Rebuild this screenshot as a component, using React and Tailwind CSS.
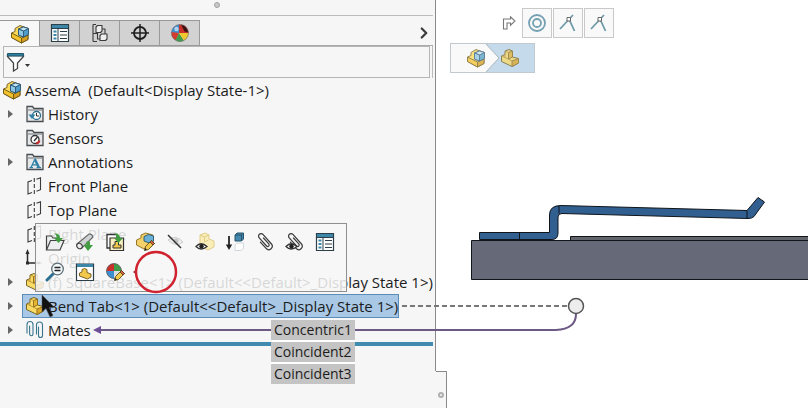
import { ChevronRight } from 'lucide-react'

function AssemblyIcon() {
  return (
    <svg viewBox="0 0 20 20" className="size-5 shrink-0" strokeLinejoin="round" strokeWidth=".9">
      <path d="M1.500 9 5 7.500V4.500l5-3 8 3v11L11.500 19l-10-5.500z" fill="#fbd95a" stroke="#6b5618" />
      <path d="M1.500 9 11.500 14V19l-10-5.500z" fill="#f3c22c" stroke="#6b5618" />
      <path d="M11.500 14 18 11V15.500L11.500 19z" fill="#d79d1c" stroke="#6b5618" />
      <path d="M8.500 5 13.500 3 18.500 4.500v6l-5 2.500-5-2z" fill="#4f9cc8" stroke="#28546f" />
      <path d="M8.500 5 13.500 3 18.500 4.500 13.500 7z" fill="#c4e4f4" stroke="#28546f" />
      <path d="M8.500 5 13.500 7v6l-5-2z" fill="#8cc6e4" stroke="#28546f" />
    </svg>
  )
}

function PartIcon() {
  return (
    <svg viewBox="0 0 20 20" className="size-5 shrink-0" strokeLinejoin="round" strokeWidth=".9">
      <path d="M1.500 8 5 6.500V3L9 1.500 12.500 3v6l6 1.500v4.500L12 18.500l-10.500-5z" fill="#fbdb66" stroke="#6b5618" />
      <path d="M12 13 18.500 10.500v4.500L12 18.500z" fill="#dfa825" stroke="#8a6a1c" />
      <path d="M8.500 4.500 12.500 3v6L8.500 11z" fill="#e6b432" stroke="#8a6a1c" />
      <path d="M1.500 8 5 9.500 12 13M5 3l3.500 1.500M5 6.500v3" fill="none" stroke="#b58d28" />
    </svg>
  )
}

function FolderIcon({ children }) {
  return (
    <svg viewBox="0 0 20 20" className="size-5 shrink-0" fill="none" strokeWidth="1.300">
      <path d="M2 17.500V2.500h5.500L9 4.500h9v13z" fill="#e6e8ea" stroke="#4a4d4f" />
      <path d="M2.500 6h15" stroke="#8d9092" />
      {children}
    </svg>
  )
}

function HistoryIcon() {
  return (
    <FolderIcon>
      <circle cx="11.500" cy="11.500" r="4" fill="#fff" stroke="#2d6d8d" />
      <path d="M11.500 9v3h2.500" stroke="#333" strokeWidth="1" />
      <path d="M3.500 10.500h7l-3.500 4.500z" fill="#2d7fa6" />
    </FolderIcon>
  )
}

function SensorsIcon() {
  return (
    <FolderIcon>
      <circle cx="10" cy="11.500" r="4" fill="#fff" stroke="#333" />
      <path d="m9 13 3.500-4" stroke="#333" strokeWidth="1.500" />
      <path d="M11 15.500a4 4 0 0 0 3.500-3" stroke="#c22b2b" strokeWidth="2" />
    </FolderIcon>
  )
}

function AnnotationsIcon() {
  return (
    <FolderIcon>
      <path d="M6 15.500 9.800 7.500M7.500 12.800h5M4.500 15.700H8M11.500 15.700h4.500" stroke="#2d7fa6" strokeWidth="1.300" />
      <path d="m9.800 7 4 8.500" stroke="#2d7fa6" strokeWidth="2.400" />
    </FolderIcon>
  )
}

function PlaneIcon() {
  return (
    <svg viewBox="0 0 20 20" className="size-5 shrink-0" fill="none" stroke="#3a3a3a" strokeWidth="1.100">
      <path d="M7 4.500 3 6v12l4-1.500M11.500 3.200l4-1.500v12l-4 1.500" />
      <path d="M9.300 2v16" strokeDasharray="4 2" />
    </svg>
  )
}

function OriginIcon() {
  return (
    <svg viewBox="0 0 20 20" className="size-5 shrink-0" fill="#2b2b2b" stroke="#2b2b2b" strokeWidth="1.500">
      <path d="M2.500 15V5M2.500 15H13" />
      <path d="M.5 6 2.500 1 4.500 6zM13 13.500l4 1.500-4 1.500z" strokeWidth="0" />
      <rect x="1" y="13.500" width="3" height="3" strokeWidth="0" />
    </svg>
  )
}

function MatesIcon() {
  return (
    <svg viewBox="0 0 20 20" className="size-5 shrink-0" fill="none" stroke="#3a7590" strokeWidth="1.100" strokeLinecap="round">
      <path d="M2 13V4.500a3 3 0 0 1 6 0V14a1.700 1.700 0 0 1-3.400 0V6" />
      <path d="M11.500 14V5a3 3 0 0 1 6 0v10.500a2 2 0 0 1-4 0V7" />
    </svg>
  )
}

function PropertiesIcon() {
  return (
    <svg viewBox="0 0 20 20" className="size-5" fill="none">
      <path d="M1.500 1.500h17v17h-17z" fill="#fff" stroke="#2c3e48" strokeWidth="1.200" />
      <path d="M2 2h16v3H2z" fill="#3c86a8" />
      <path d="M2 5.500h16M8 5.500v13" stroke="#2c3e48" />
      <path d="M3.500 8.500h3M3.500 12h3M3.500 15.500h3" stroke="#3c86a8" strokeWidth="2" />
      <path d="M10 8.500h7M10 12h7M10 15.500h7" stroke="#2c3e48" strokeWidth="1.200" />
    </svg>
  )
}

function ConfigurationsIcon() {
  return (
    <svg viewBox="0 0 20 20" className="size-5" fill="#efefef" stroke="#3a3a3a" strokeWidth="1.100" strokeLinejoin="round">
      <path d="M3 1.500v17M3 1.500h3M3 10.500h4M3 18.500h4" fill="none" />
      <path d="m6 4 1.500-1.500H12V8l-1.500 1.500H6zM10 12.500l1.500-1.500H17v5l-1.500 1.500H10z" />
      <path d="M12 6h3v5M7.500 10v6H10" fill="none" />
    </svg>
  )
}

function TargetIcon() {
  return (
    <svg viewBox="0 0 20 20" className="size-5" fill="none" stroke="#1f1f1f">
      <circle cx="10" cy="10" r="6" strokeWidth="1.800" />
      <path d="M10 1v18M1 10h18" strokeWidth="1.500" />
    </svg>
  )
}

function DisplayIcon() {
  return (
    <svg viewBox="0 0 20 20" className="size-5">
      <path d="M9 10V1.500A8.500 8.500 0 0 0 1.500 10z" fill="#3c8fd0" />
      <path d="M1.500 9 9 10 6 17.500A8.500 8.500 0 0 1 1.500 9z" fill="#d63a2e" />
      <path d="M9 10 5.500 17.300A8.500 8.500 0 0 0 14 17.500z" fill="#3f9d49" />
      <path d="M9 10l5 7.500A8.500 8.500 0 0 0 18.500 10z" fill="#f0c62f" />
      <path d="M9 10V1.500A8.500 8.500 0 0 1 18.500 10z" fill="#c9302c" />
      <path d="M11 1.500q6 1.500 7.500 8l-4-1z" fill="#3b1010" />
      <path d="M9 10h9.500q-.5 3-1.500 4z" fill="#f0c62f" />
      <circle cx="6.500" cy="6" r="2.200" fill="#fff" opacity=".6" />
      <circle cx="10" cy="10" r="8.500" fill="none" stroke="#666" strokeWidth=".6" />
    </svg>
  )
}

function Pencil() {
  return (
    <g strokeWidth=".8" strokeLinejoin="round">
      <path d="m9.500 18.500 1-4 6-6 3 3-6 6z" fill="#f2c84b" stroke="#4d3a12" />
      <path d="m15 10 1.500-1.500 3 3L18 13z" fill="#d8624f" stroke="#4d3a12" />
      <path d="m9.500 18.500.7-2.500 1.800 1.800z" fill="#222" />
    </g>
  )
}

function Eye() {
  return (
    <g>
      <path d="M1 14.500q5-5.500 11 0-6 5-11 0z" fill="#fff" stroke="#333" strokeWidth="1.300" />
      <circle cx="6.500" cy="14.300" r="2.200" fill="#222" />
    </g>
  )
}

function Clip() {
  return (
    <path
      d="M6.500 7v8.500a3.500 3.500 0 0 0 7 0V3a2.500 2.500 0 0 0-5 0v11a1.500 1.500 0 0 0 3 0V6"
      stroke="#3a3a3a"
      strokeWidth="1.200"
      strokeLinecap="round"
      transform="rotate(-42 10 10)"
    />
  )
}

const GREEN_ARROW = 'M9 1.500q6-.5 6 4.500h3l-4.500 5L9 6h2.500Q12 3 9 1.500z'

const TOOLS = [
  {
    label: 'Open Part',
    art: (
      <>
        <path d="M1.500 18V4h5l1.500 2h5v3M1.500 18l4-9.500h13.500l-4 9.500z" fill="#eceeef" stroke="#444" strokeWidth="1.200" />
        <path d={GREEN_ARROW} fill="#3f9d3f" />
      </>
    ),
  },
  {
    label: 'Make Virtual',
    art: (
      <>
        <path d="M2 12 14 2q3-.5 4 3L7 16z" fill="#d0d3d5" stroke="#666" strokeWidth="1.100" />
        <ellipse cx="4.500" cy="14" rx="2.500" ry="3" fill="#eee" stroke="#444" strokeWidth="1.200" transform="rotate(-40 4.500 14)" />
        <path d="M11.500 9.500H15V13h3l-5 6-4.500-6h3z" fill="#3f9d3f" />
      </>
    ),
  },
  {
    label: 'Edit Drawing',
    art: (
      <>
        <path d="M2 2.500h10V16H2z" fill="#fff" stroke="#333" strokeWidth="1.300" />
        <path d="M5 6h13.500v12.500H5z" fill="#f8eec0" stroke="#333" strokeWidth="1.200" />
        <path d="M8 16v-3h2V9.500h3.500V13H16v3z" fill="#f2c84b" stroke="#333" />
        <path d={GREEN_ARROW} fill="#3f9d3f" />
      </>
    ),
  },
  {
    label: 'Edit Component',
    art: (
      <>
        <path d="M1.500 8 6 6V3l4.500-2L18 3v7L9 17l-7.500-4z" fill="#f5d16a" stroke="#8a6a1c" strokeWidth=".9" />
        <path d="m9 4.500 4.500-2L18.500 4v5L14 11 9 9z" fill="#6bb0d6" stroke="#28546f" strokeWidth=".9" />
        <Pencil />
      </>
    ),
  },
  {
    label: 'Hide Components',
    art: (
      <>
        <path d="M3 8q8-6 15 2-7 6-15-2z" fill="#eee" stroke="#ccc" />
        <circle cx="11" cy="9" r="2.500" fill="#c4c4c4" />
        <path d="m3 3 13 13" stroke="#333" strokeWidth="1.500" />
      </>
    ),
  },
  {
    label: 'Change Transparency',
    art: (
      <>
        <path d="M5 7V3l5-2 4 2v4l5 2v6l-6 3-8-4z" fill="#faeeb8" stroke="#e0cd88" />
        <path d="m5 3 4.500 2L14 3M9.500 5v5l4-2" fill="none" stroke="#e0cd88" />
        <Eye />
      </>
    ),
  },
  {
    label: 'Suppress',
    art: (
      <>
        <path d="M4 4v10" stroke="#222" strokeWidth="1.800" />
        <path d="M.8 12.500h6.400L4 18z" fill="#222" />
        <path d="m10 3 2-2h6.500v6l-2 2H10z" fill="#4389ad" stroke="#28546f" />
        <path d="M10 3h6.500l2-2M16.500 3v6" fill="none" stroke="#28546f" />
        <path d="m10 13 2-2h6.500v5l-2 2.500H10z" fill="#fff" stroke="#cfd8dc" />
      </>
    ),
  },
  { label: 'View Mates', art: <Clip /> },
  {
    label: 'Hide Mates',
    art: (
      <>
        <Clip />
        <Eye />
      </>
    ),
  },
  { label: 'Component Properties', art: <PropertiesIcon /> },
  {
    label: 'Zoom to Selection',
    art: (
      <>
        <path d="m2 18 6-6" stroke="#2d6f93" strokeWidth="3" strokeLinecap="round" />
        <circle cx="12.500" cy="7" r="5.800" fill="#f4f9fb" stroke="#5d6d76" strokeWidth="1.300" />
        <path d="M9.500 5.500h6M9.500 8.500h6" stroke="#222" strokeWidth="1.500" />
      </>
    ),
  },
  {
    label: 'Open in Position',
    art: (
      <>
        <path d="M1.500 2h17v16.500h-17z" fill="#fff" stroke="#2c3e48" strokeWidth="1.200" />
        <path d="M2 2h16v3H2z" fill="#3c86a8" />
        <path d="M4.500 11 7 10V7.500L9.500 6.500 12 7.500v3l4 1.500v3l-3.500 2L4.500 14z" fill="#f2c84b" stroke="#6e5318" strokeWidth=".9" />
      </>
    ),
  },
  {
    label: 'Appearances',
    art: (
      <>
        <path d="M9 9V1.500A7.500 7.500 0 0 0 1.500 9z" fill="#c9302c" />
        <path d="M9 9V1.500A7.500 7.500 0 0 1 16.500 9z" fill="#3f9d49" />
        <path d="M9 9H1.500A7.500 7.500 0 0 0 9 16.500z" fill="#3c8fd0" />
        <path d="M9 9h7.500A7.500 7.500 0 0 1 9 16.500z" fill="#d9dee2" />
        <circle cx="9" cy="9" r="7.500" fill="none" stroke="#555" strokeWidth=".8" />
        <Pencil />
      </>
    ),
  },
]

const TABS = [
  { label: 'FeatureManager Design Tree', icon: <AssemblyIcon /> },
  { label: 'PropertyManager', icon: <PropertiesIcon /> },
  { label: 'ConfigurationManager', icon: <ConfigurationsIcon /> },
  { label: 'DimXpertManager', icon: <TargetIcon /> },
  { label: 'DisplayManager', icon: <DisplayIcon /> },
]

const NODES = [
  { name: 'History', icon: <HistoryIcon />, expandable: true },
  { name: 'Sensors', icon: <SensorsIcon /> },
  { name: 'Annotations', icon: <AnnotationsIcon />, expandable: true },
  { name: 'Front Plane', icon: <PlaneIcon /> },
  { name: 'Top Plane', icon: <PlaneIcon /> },
  { name: 'Right Plane', icon: <PlaneIcon /> },
  { name: 'Origin', icon: <OriginIcon /> },
  { name: '(f) SquareBase<1> (Default<<Default>_Display State 1>)', icon: <PartIcon />, expandable: true },
  { name: 'Bend Tab<1> (Default<<Default>_Display State 1>)', icon: <PartIcon />, expandable: true, selected: true },
  { name: 'Mates', icon: <MatesIcon />, expandable: true },
]

const MATES = ['Concentric1', 'Coincident2', 'Coincident3']

function TreeNode({ node }) {
  return (
    <li className="flex h-6 items-center">
      <span className="flex w-[22px] shrink-0 justify-center pr-0.5">
        {node.expandable && (
          <button type="button" aria-label={`Expand ${node.name}`}>
            <svg viewBox="0 0 5 8" className="h-2 w-[5px]">
              <path d="M0 0 5 4 0 8z" fill="#666" />
            </svg>
          </button>
        )}
      </span>
      <span
        className={
          node.selected
            ? 'flex h-6 items-center gap-[3px] border border-[#5b8db8] bg-[#a8c8e6] pl-0.5'
            : 'flex h-6 items-center gap-[3px] border border-transparent pl-0.5'
        }
      >
        {node.icon}
        {node.name}
      </span>
    </li>
  )
}

function FeatureTree() {
  return (
    <div className="border-b-4 border-[#428bb0]">
      <div className="flex h-6 items-center gap-[3px] whitespace-pre pl-0.5">
        <AssemblyIcon />
        {'AssemA  (Default<Display State-1>)'}
      </div>
      <ul>
        {NODES.map((node) => <TreeNode key={node.name} node={node} />)}
      </ul>
    </div>
  )
}

function ContextToolbar() {
  return (
    <div role="toolbar" className="absolute left-[35px] top-[223px] flex w-[312px] flex-wrap border border-[#8f8f8f] bg-[#f7f7f7]/85 px-1 pb-1 pt-[3px]">
      {TOOLS.map((tool) => (
        <button key={tool.label} type="button" aria-label={tool.label} className="flex size-[30px] items-center justify-center">
          <svg viewBox="0 0 20 20" className="size-5" fill="none">{tool.art}</svg>
        </button>
      ))}
    </div>
  )
}

function Sidebar() {
  return (
    <aside className="w-[54%] shrink-0 border-r border-[#8a8a8a] bg-[#f6f6f6] pb-[25px] pr-0.5">
      <div className="flex h-4 justify-center border-b border-[#bdbdbd] pt-0.5">
        <span className="size-1.5 rounded-full border border-[#a0a0a0] bg-[#c8c8c8]" />
      </div>
      <div className="flex items-end pt-1">
        {TABS.map((tab, i) => (
          <button
            key={tab.label}
            type="button"
            aria-label={tab.label}
            className={
              i === 0
                ? 'flex h-[26px] w-10 items-center justify-center border-r border-t border-[#999] bg-[#f8f8f8]'
                : 'flex h-[26px] w-10 items-center justify-center border-b border-r border-t border-[#999] bg-[#d2d2d2]'
            }
          >
            {tab.icon}
          </button>
        ))}
        <div className="flex h-[26px] flex-1 items-center justify-end border-b border-[#aaa]">
          <button type="button" aria-label="More tabs">
            <ChevronRight size={18} strokeWidth={3} color="#3c3c3c" />
          </button>
        </div>
      </div>
      <div className="border-r border-[#bbb] pl-[3px] pr-0.5">
        <label className="flex h-8 items-center border border-[#b5b5b5] pl-0.5">
          <svg viewBox="0 0 24 20" className="h-5 w-6 shrink-0" fill="none">
            <path d="M1.500 3.500h16v1l-6 6.500v5.500l-4 2.500v-8l-6-6.500z" fill="#fff" stroke="#444" strokeWidth="1.300" />
            <path d="M1.500 1.500h16v2.500h-16z" fill="#2f7f9f" stroke="#24566b" />
            <path d="M19 12h5l-2.500 3z" fill="#333" />
          </svg>
          <input type="text" aria-label="Filter" className="min-w-0 flex-1 bg-transparent outline-none" />
        </label>
      </div>
      <FeatureTree />
    </aside>
  )
}

function CoincidentIcon() {
  return (
    <svg viewBox="0 0 20 20" className="size-5" fill="none">
      <path d="M2 16 15 2M11 6l5.500 12" stroke="#6e9aa8" strokeWidth="1.800" />
      <path d="M9 4.500h3.500V8H9z" fill="#fff" stroke="#666" />
    </svg>
  )
}

function MateBar() {
  return (
    <div className="flex items-center gap-px pl-[66px]">
      <svg viewBox="0 0 14 14" className="mr-[5px] size-3.5" fill="#fff" stroke="#777" strokeWidth="1.100">
        <path d="M1.500 13V3h7V.8L13 5 8.500 9.200V7H5v6z" />
      </svg>
      <button type="button" aria-label="Concentric1" className="flex size-[30px] items-center justify-center border border-[#c9c9c9] bg-[#f9f9f9]">
        <svg viewBox="0 0 20 20" className="size-5" fill="none" stroke="#76a1b3" strokeWidth="1.800">
          <circle cx="10" cy="10" r="8" />
          <circle cx="10" cy="10" r="4" />
        </svg>
      </button>
      <button type="button" aria-label="Coincident2" className="flex size-[30px] items-center justify-center border border-[#c9c9c9] bg-[#f9f9f9]">
        <CoincidentIcon />
      </button>
      <button type="button" aria-label="Coincident3" className="flex size-[30px] items-center justify-center border border-[#c9c9c9] bg-[#f9f9f9]">
        <CoincidentIcon />
      </button>
    </div>
  )
}

function Breadcrumbs() {
  return (
    <nav aria-label="Selection" className="ml-3.5 mt-[5px] flex h-[30px] w-[85px] border border-[#c2c9ce] bg-[#f9f9f9]">
      <button type="button" aria-label="AssemA" className="flex flex-1 items-center justify-end opacity-75">
        <AssemblyIcon />
      </button>
      <svg viewBox="0 0 14 28" className="h-7 w-3.5">
        <path d="M0 0h14v28H0l13-14z" fill="#c5daeb" />
        <path d="m0 0 13 14L0 28" fill="none" stroke="#a8b4bd" />
      </svg>
      <button type="button" aria-label="Bend Tab" className="flex w-[34px] items-center bg-[#c5daeb]">
        <span className="flex opacity-75"><PartIcon /></span>
      </button>
    </nav>
  )
}

// Side view of the bent tab resting on the base plate
function Model() {
  return (
    <svg className="mt-[123px] block h-[88px] w-full" stroke="#10151c" strokeLinejoin="round">
      <rect x="134.500" y="40.500" width="3000" height="4" fill="#62666c" />
      <rect x="35.500" y="44.500" width="3000" height="39" fill="#666a78" />
      <path
        d="M43.500 36.500H113.500V19Q113.500 9.500 125 9.500L311 14.500 322 1.500 328.500 6 318 20.500Q316 22.500 312 22.500L126 17.500Q122 17.500 122 21V37Q122 43.500 116 43.500H43.500z"
        fill="#315f8f"
      />
      <path d="M83.500 36.500v7M123 9.500v8M311 14.500v8" />
    </svg>
  )
}

function Viewport() {
  return (
    <main className="min-w-0 flex-1 overflow-hidden pt-2">
      <MateBar />
      <Breadcrumbs />
      <Model />
    </main>
  )
}

function MateCallout() {
  return (
    <>
      <svg className="pointer-events-none absolute left-0 top-[290px] h-12 w-[600px]" fill="none">
        <path d="M402 16h166" stroke="#777" strokeWidth="2" strokeDasharray="5 3" />
        <path d="M99 40H556Q576 39 576 24" stroke="#6c5a85" strokeWidth="2" />
        <path d="m93 40 8-4v8z" fill="#6c4f96" />
        <circle cx="576" cy="16" r="7.500" fill="#ededed" stroke="#555" strokeWidth="1.500" />
      </svg>
      <ul className="absolute left-[271px] top-[320px] flex flex-col gap-0.5 bg-white text-sm">
        {MATES.map((mate) => <li key={mate} className="h-5 bg-[#c4c4c4] px-[3px] leading-5">{mate}</li>)}
      </ul>
    </>
  )
}

export default function App() {
  return (
    <div className="relative flex min-h-screen flex-col overflow-hidden whitespace-nowrap bg-white font-['Open_Sans',sans-serif] text-[15px] text-[#1c1c1c]">
      <div className="flex">
        <Sidebar />
        <Viewport />
      </div>
      <div className="flex flex-1">
        <div className="w-[54%] shrink-0 bg-[#f6f6f6]" />
        <div className="flex w-[11px] items-center justify-center border-r border-t border-[#8a8a8a] bg-[#f6f6f6] pt-2.5">
          <span className="size-1.5 shrink-0 rounded-full border-2 border-[#b0b0b0]" />
        </div>
      </div>

      <ContextToolbar />
      <svg className="pointer-events-none absolute left-[130px] top-[250px] h-11 w-12" fill="none">
        <path d="m3 22 4-3v6z" fill="#8c2f2f" />
        <circle cx="26" cy="22" r="20" stroke="#d1232f" strokeWidth="2.500" />
      </svg>
      <MateCallout />
      <svg viewBox="0 0 14 24" className="pointer-events-none absolute left-[41px] top-[294px] h-6 w-3.5">
        <path d="M1 1v17l4-3.500 4 8.500 3-1.500-4-8h5.500z" fill="#111" stroke="#555" strokeWidth=".5" />
      </svg>
    </div>
  )
}
